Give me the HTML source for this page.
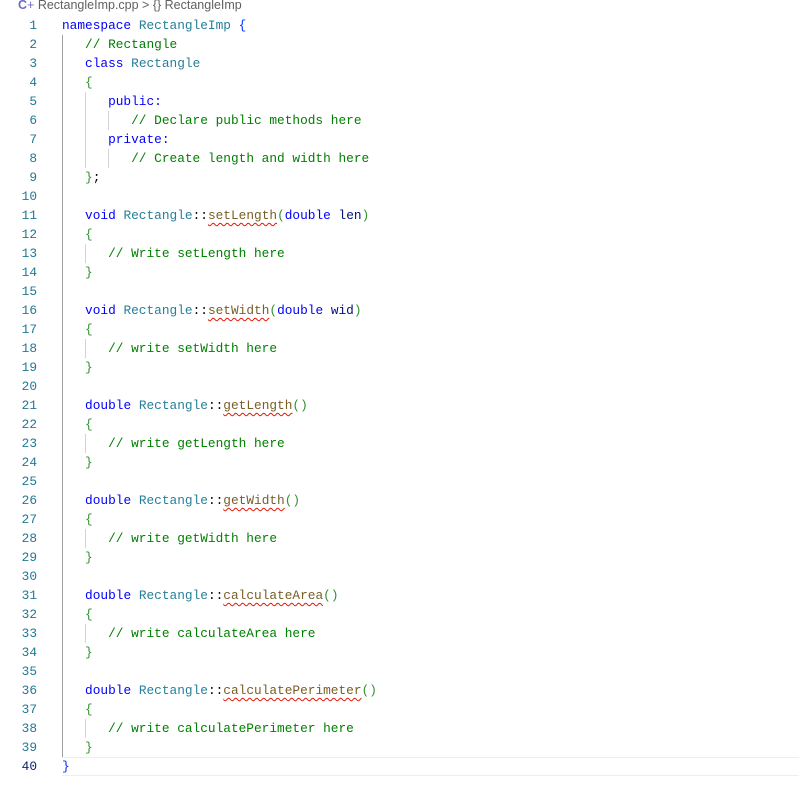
<!DOCTYPE html>
<html><head><meta charset="utf-8"><style>
body{margin:0;background:#fff;width:799px;height:798px;overflow:hidden;position:relative}
.bc{position:absolute;left:18px;top:-2px;font:12.5px "Liberation Sans",sans-serif;color:#616161;white-space:pre}
.bc .ic{color:#6c6cc4;font-weight:bold}
.code{position:absolute;left:0;top:16px;width:799px;font:12.8px/19px "Liberation Mono",monospace}
.l{height:19px;position:relative}
.n{position:absolute;left:0;width:37px;color:#237893;text-align:right}
.t{position:absolute;left:62px;white-space:pre}
.k{color:#0000ff}.ty{color:#267f99}.c{color:#008000}.f{color:#795e26}.p{color:#001080}
.b1{color:#0431fa}.b2{color:#319331}
.sq{text-decoration:underline wavy #e51400;text-underline-offset:3px;text-decoration-thickness:1px}
.g{position:absolute;width:1px;background:#d3d3d3}
.cur{position:absolute;left:62px;right:0;top:757px;height:17px;border-top:1px solid #eee;border-bottom:1px solid #eee}
</style></head><body>
<div class="bc"><span class="ic">C</span><span style="color:#6c6cc4">+</span> RectangleImp.cpp &gt; {} RectangleImp</div>
<div class="cur"></div>
<div class="g" style="left:62px;top:35px;height:722px;background:#a0a0a0"></div>
<div class="g" style="left:85px;top:92px;height:76px"></div>
<div class="g" style="left:108px;top:111px;height:19px"></div>
<div class="g" style="left:108px;top:149px;height:19px"></div>
<div class="g" style="left:85px;top:244px;height:19px"></div>
<div class="g" style="left:85px;top:339px;height:19px"></div>
<div class="g" style="left:85px;top:434px;height:19px"></div>
<div class="g" style="left:85px;top:529px;height:19px"></div>
<div class="g" style="left:85px;top:624px;height:19px"></div>
<div class="g" style="left:85px;top:719px;height:19px"></div>
<div class="code"><div class="l"><span class="n">1</span><span class="t"><span class="k">namespace</span> <span class="ty">RectangleImp</span> <span class="b1">{</span></span></div><div class="l"><span class="n">2</span><span class="t">   <span class="c">// Rectangle</span></span></div><div class="l"><span class="n">3</span><span class="t">   <span class="k">class</span> <span class="ty">Rectangle</span></span></div><div class="l"><span class="n">4</span><span class="t">   <span class="b2">{</span></span></div><div class="l"><span class="n">5</span><span class="t">      <span class="k">public:</span></span></div><div class="l"><span class="n">6</span><span class="t">         <span class="c">// Declare public methods here</span></span></div><div class="l"><span class="n">7</span><span class="t">      <span class="k">private:</span></span></div><div class="l"><span class="n">8</span><span class="t">         <span class="c">// Create length and width here</span></span></div><div class="l"><span class="n">9</span><span class="t">   <span class="b2">}</span>;</span></div><div class="l"><span class="n">10</span></div><div class="l"><span class="n">11</span><span class="t">   <span class="k">void</span> <span class="ty">Rectangle</span>::<span class="f sq">setLength</span><span class="b2">(</span><span class="k">double</span> <span class="p">len</span><span class="b2">)</span></span></div><div class="l"><span class="n">12</span><span class="t">   <span class="b2">{</span></span></div><div class="l"><span class="n">13</span><span class="t">      <span class="c">// Write setLength here</span></span></div><div class="l"><span class="n">14</span><span class="t">   <span class="b2">}</span></span></div><div class="l"><span class="n">15</span></div><div class="l"><span class="n">16</span><span class="t">   <span class="k">void</span> <span class="ty">Rectangle</span>::<span class="f sq">setWidth</span><span class="b2">(</span><span class="k">double</span> <span class="p">wid</span><span class="b2">)</span></span></div><div class="l"><span class="n">17</span><span class="t">   <span class="b2">{</span></span></div><div class="l"><span class="n">18</span><span class="t">      <span class="c">// write setWidth here</span></span></div><div class="l"><span class="n">19</span><span class="t">   <span class="b2">}</span></span></div><div class="l"><span class="n">20</span></div><div class="l"><span class="n">21</span><span class="t">   <span class="k">double</span> <span class="ty">Rectangle</span>::<span class="f sq">getLength</span><span class="b2">()</span></span></div><div class="l"><span class="n">22</span><span class="t">   <span class="b2">{</span></span></div><div class="l"><span class="n">23</span><span class="t">      <span class="c">// write getLength here</span></span></div><div class="l"><span class="n">24</span><span class="t">   <span class="b2">}</span></span></div><div class="l"><span class="n">25</span></div><div class="l"><span class="n">26</span><span class="t">   <span class="k">double</span> <span class="ty">Rectangle</span>::<span class="f sq">getWidth</span><span class="b2">()</span></span></div><div class="l"><span class="n">27</span><span class="t">   <span class="b2">{</span></span></div><div class="l"><span class="n">28</span><span class="t">      <span class="c">// write getWidth here</span></span></div><div class="l"><span class="n">29</span><span class="t">   <span class="b2">}</span></span></div><div class="l"><span class="n">30</span></div><div class="l"><span class="n">31</span><span class="t">   <span class="k">double</span> <span class="ty">Rectangle</span>::<span class="f sq">calculateArea</span><span class="b2">()</span></span></div><div class="l"><span class="n">32</span><span class="t">   <span class="b2">{</span></span></div><div class="l"><span class="n">33</span><span class="t">      <span class="c">// write calculateArea here</span></span></div><div class="l"><span class="n">34</span><span class="t">   <span class="b2">}</span></span></div><div class="l"><span class="n">35</span></div><div class="l"><span class="n">36</span><span class="t">   <span class="k">double</span> <span class="ty">Rectangle</span>::<span class="f sq">calculatePerimeter</span><span class="b2">()</span></span></div><div class="l"><span class="n">37</span><span class="t">   <span class="b2">{</span></span></div><div class="l"><span class="n">38</span><span class="t">      <span class="c">// write calculatePerimeter here</span></span></div><div class="l"><span class="n">39</span><span class="t">   <span class="b2">}</span></span></div><div class="l"><span class="n" style="color:#0b216f">40</span><span class="t"><span class="b1">}</span></span></div></div>
</body></html>
